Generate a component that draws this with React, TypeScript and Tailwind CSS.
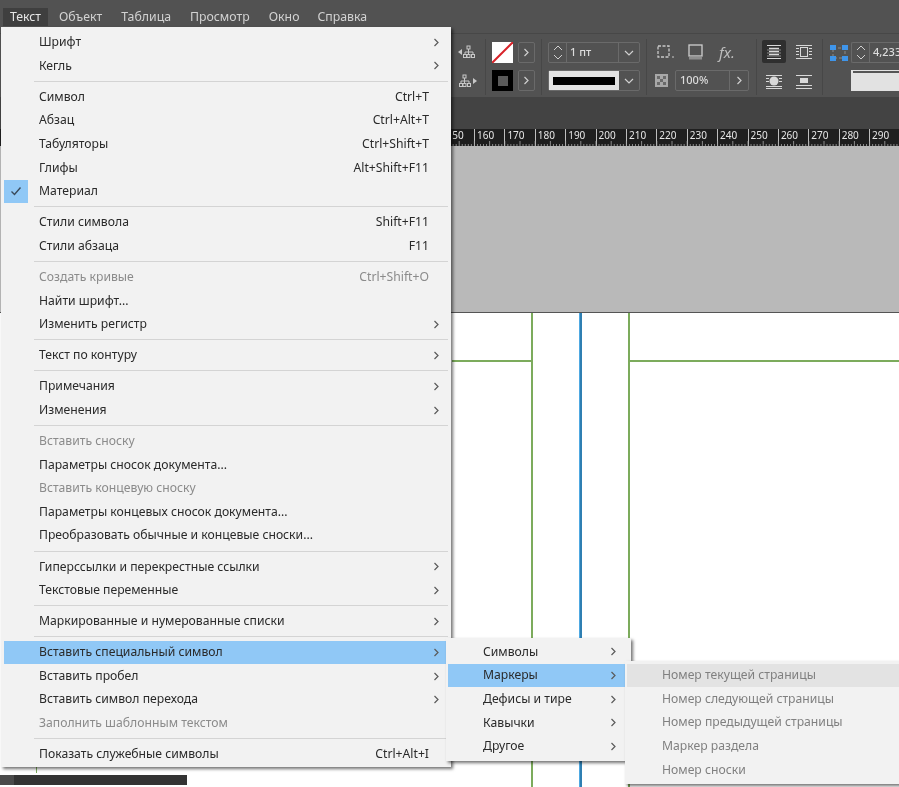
import React from "react";

const FONT = "font-['Noto_Sans','Open_Sans',sans-serif]";

type Row =
  | { sep: true }
  | { label: string; shortcut?: string; arrow?: boolean; disabled?: boolean; hl?: boolean; check?: boolean };

const S: Row = { sep: true };
const rows: Row[] = [
  { label: "Шрифт", arrow: true },
  { label: "Кегль", arrow: true },
  S,
  { label: "Символ", shortcut: "Ctrl+T" },
  { label: "Абзац", shortcut: "Ctrl+Alt+T" },
  { label: "Табуляторы", shortcut: "Ctrl+Shift+T" },
  { label: "Глифы", shortcut: "Alt+Shift+F11" },
  { label: "Материал", check: true },
  S,
  { label: "Стили символа", shortcut: "Shift+F11" },
  { label: "Стили абзаца", shortcut: "F11" },
  S,
  { label: "Создать кривые", shortcut: "Ctrl+Shift+O", disabled: true },
  { label: "Найти шрифт..." },
  { label: "Изменить регистр", arrow: true },
  S,
  { label: "Текст по контуру", arrow: true },
  S,
  { label: "Примечания", arrow: true },
  { label: "Изменения", arrow: true },
  S,
  { label: "Вставить сноску", disabled: true },
  { label: "Параметры сносок документа..." },
  { label: "Вставить концевую сноску", disabled: true },
  { label: "Параметры концевых сносок документа..." },
  { label: "Преобразовать обычные и концевые сноски..." },
  S,
  { label: "Гиперссылки и перекрестные ссылки", arrow: true },
  { label: "Текстовые переменные", arrow: true },
  S,
  { label: "Маркированные и нумерованные списки", arrow: true },
  S,
  { label: "Вставить специальный символ", arrow: true, hl: true },
  { label: "Вставить пробел", arrow: true },
  { label: "Вставить символ перехода", arrow: true },
  { label: "Заполнить шаблонным текстом", disabled: true },
  S,
  { label: "Показать служебные символы", shortcut: "Ctrl+Alt+I" },
];

function Chevron({ color = "#5a5a5a" }: { color?: string }) {
  return (
    <svg width="7" height="9" viewBox="0 0 7 9" fill="none">
      <path d="M1.5 1 L5 4.5 L1.5 8" stroke={color} strokeWidth="1.2" />
    </svg>
  );
}

function MenuRow({ r }: { r: Extract<Row, { label: string }> }) {
  return (
    <div className={`relative flex h-[23.6px] items-center ml-[3px] mr-[5px] pl-[35px] pr-[4px] ${r.hl ? "bg-[#90c8f6]" : ""} ${r.disabled ? "text-[#8b8b8b]" : "text-[#2a2a2a]"}`}>
      {r.check && (
        <div className="absolute left-0 top-0 flex h-[23.6px] w-[24px] items-center justify-center bg-[#90c8f6]">
          <svg width="12" height="10" viewBox="0 0 12 10" fill="none">
            <path d="M1.5 5.5 L4.5 8.5 L10.5 1.5" stroke="#3a4a5a" strokeWidth="1.4" />
          </svg>
        </div>
      )}
      <span className="flex-1 whitespace-nowrap">{r.label}</span>
      {r.shortcut && <span className="whitespace-nowrap">{r.shortcut}</span>}
      <span className="ml-px flex w-[12px] justify-end pr-[2px]">{r.arrow && <Chevron />}</span>
    </div>
  );
}

function Sep() {
  return (
    <div className="flex h-[7.5px] items-center pl-[33px] pr-[3px]">
      <div className="h-px w-full bg-[#d4d4d4]" />
    </div>
  );
}

function SubRow({ label, hl }: { label: string; hl?: boolean }) {
  return (
    <div className={`flex h-[23.7px] items-center ml-[2px] mr-[6px] pl-[35px] pr-[8px] text-[#2a2a2a] ${hl ? "bg-[#90c8f6]" : ""}`}>
      <span className="flex-1 whitespace-nowrap">{label}</span>
      <Chevron />
    </div>
  );
}

function TreeIcon({ flip }: { flip?: boolean }) {
  return (
    <svg width="21" height="14" viewBox="0 0 21 14" fill="none" stroke="#c8c8c8" strokeWidth="1">
      {flip ? <path d="M16 4 L20 7 L16 10 Z" fill="#c8c8c8" stroke="none" /> : <path d="M5 4 L1 7 L5 10 Z" fill="#c8c8c8" stroke="none" />}
      <g transform={flip ? "translate(-4 0)" : ""}>
        <rect x="10" y="1" width="3" height="3" />
        <path d="M11.5 4 V7 M8 9 V7 H16 V9 M11.5 7 V9" />
        <rect x="6.5" y="9.5" width="3" height="3" />
        <rect x="10" y="9.5" width="3" height="3" />
        <rect x="14.5" y="9.5" width="3" height="3" />
      </g>
    </svg>
  );
}

function Stepper() {
  return (
    <div className="flex h-full w-[18px] shrink-0 flex-col items-center justify-center gap-[3px] border-r border-[#6b6b6b]">
      <svg width="10" height="6" viewBox="0 0 10 6" fill="none"><path d="M1 5 L5 1 L9 5" stroke="#d0d0d0" /></svg>
      <svg width="10" height="6" viewBox="0 0 10 6" fill="none"><path d="M1 1 L5 5 L9 1" stroke="#d0d0d0" /></svg>
    </div>
  );
}

function Down() {
  return (
    <div className="flex h-full w-[20px] items-center justify-center">
      <svg width="10" height="6" viewBox="0 0 10 6" fill="none"><path d="M1 1 L5 5 L9 1" stroke="#d0d0d0" strokeWidth="1.2" /></svg>
    </div>
  );
}

function VSep() {
  return <div className="h-[56px] w-px bg-[#474747]" />;
}

function SmallBtn() {
  return (
    <div className="flex h-[21px] w-[17px] items-center justify-center rounded-[2px] border border-[#6a6a6a]">
      <Chevron color="#cfcfcf" />
    </div>
  );
}

function WrapIcon({ kind }: { kind: number }) {
  return (
    <svg width="18" height="16" viewBox="0 0 18 16" fill="none" stroke="#d8d8d8" strokeWidth="1">
      {kind === 0 && (
        <>
          <path d="M2 1.5 H16 M2 14.5 H16" />
          <path d="M4 4.5 H14 M4 7.5 H14 M4 10.5 H14" strokeWidth="1.6" />
          <path d="M2 6 H16 M2 9 H16 M2 12 H16" stroke="#8a8a8a" />
        </>
      )}
      {kind === 1 && (
        <>
          <path d="M1 1.5 H17 M1 14.5 H17" />
          <path d="M1 4.5 H4 M1 7.5 H4 M1 10.5 H4 M14 4.5 H17 M14 7.5 H17 M14 10.5 H17" />
          <rect x="5.5" y="3.5" width="7" height="9" />
        </>
      )}
      {kind === 2 && (
        <>
          <path d="M1 1.5 H17 M1 14.5 H17 M1 12.5 H17" />
          <path d="M1 4.5 H4 M1 7.5 H4 M14 4.5 H17 M14 7.5 H17" />
          <circle cx="9" cy="7" r="4.5" fill="#d8d8d8" stroke="none" />
        </>
      )}
      {kind === 3 && (
        <>
          <path d="M1 1.5 H17 M1 14.5 H17 M1 11.5 H17" />
          <rect x="5" y="4" width="8" height="5" fill="#d8d8d8" stroke="none" />
        </>
      )}
    </svg>
  );
}

function Handles() {
  return (
    <svg className="shrink-0" width="18" height="16" viewBox="0 0 18 16" fill="none">
      <rect x="3" y="3" width="12" height="10" stroke="#8a8a8a" strokeDasharray="3 2" />
      <rect x="0" y="0" width="6" height="5" fill="#3f95ea" />
      <rect x="12" y="0" width="6" height="5" fill="#3f95ea" />
      <rect x="0" y="11" width="6" height="5" fill="#3f95ea" />
      <rect x="12" y="11" width="6" height="5" fill="#3f95ea" />
    </svg>
  );
}

function Toolbar() {
  return (
    <div className="flex h-[64px] items-center border-t border-[#474747] bg-[#525252] pl-[457px] pt-[2px] text-[#dcdcdc]">
      <div className="flex w-[28px] flex-col gap-[15px]">
        <TreeIcon />
        <TreeIcon flip />
      </div>
      <VSep />
      <div className="ml-[6px] flex flex-col gap-[7px]">
        <div className="flex gap-[5px]">
          <svg width="21" height="21" viewBox="0 0 21 21">
            <rect width="21" height="21" fill="#fff" />
            <path d="M0 21 L21 0" stroke="#d8232a" strokeWidth="2" />
          </svg>
          <SmallBtn />
        </div>
        <div className="flex gap-[5px]">
          <div className="flex h-[21px] w-[21px] items-center justify-center bg-black">
            <div className="h-[10px] w-[10px] bg-[#5a5a5a]" />
          </div>
          <SmallBtn />
        </div>
      </div>
      <div className="ml-[6px]"><VSep /></div>
      <div className="ml-[6px] flex w-[92px] flex-col gap-[7px]">
        <div className="flex h-[21px] items-center rounded-[2px] border border-[#6a6a6a]">
          <Stepper />
          <span className="ml-[3px] flex-1 text-[11px] font-medium">1 пт</span>
          <div className="h-full border-l border-[#6a6a6a]"><Down /></div>
        </div>
        <div className="flex h-[21px] items-center rounded-[2px] border border-[#6a6a6a]">
          <div className="flex h-full flex-1 items-center bg-[#e2e2e2] px-[4px]">
            <div className="h-[8px] w-full bg-black" />
          </div>
          <Down />
        </div>
      </div>
      <div className="ml-[6px]"><VSep /></div>
      <div className="ml-[8px] flex w-[94px] flex-col gap-[8px]">
        <div className="flex h-[20px] items-center">
          <svg className="ml-[2px]" width="18" height="14" viewBox="0 0 18 14" fill="none" stroke="#c9c9c9">
            <rect x="1" y="1" width="11" height="11" strokeDasharray="3 1.5" strokeWidth="1.3" />
            <path d="M15 12 H17" />
          </svg>
          <svg className="ml-[13px]" width="15" height="16" viewBox="0 0 15 16" fill="none">
            <rect x="1" y="1" width="13" height="11" stroke="#cfcfcf" strokeWidth="1.3" />
            <rect x="1" y="12.5" width="13" height="3" fill="#8d8d8d" />
          </svg>
          <span className="ml-[16px] text-[15px] italic leading-none text-[#bdbdbd]">fx.</span>
        </div>
        <div className="flex h-[21px] items-center">
          <svg width="13" height="13" viewBox="0 0 13 13">
            <rect width="13" height="13" fill="#a8a8a8" />
            <rect x="2" y="2" width="3" height="3" fill="#6a6a6a" />
            <rect x="8" y="2" width="3" height="3" fill="#6a6a6a" />
            <rect x="5" y="5" width="3" height="3" fill="#6a6a6a" />
            <rect x="2" y="8" width="3" height="3" fill="#6a6a6a" />
            <rect x="8" y="8" width="3" height="3" fill="#6a6a6a" />
          </svg>
          <div className="ml-[7px] flex h-[21px] w-[74px] items-center rounded-[2px] border border-[#6a6a6a] pl-[4px] text-[11px] font-medium">
            <span className="flex-1">100%</span>
            <div className="flex h-full w-[19px] items-center justify-center border-l border-[#6a6a6a]"><Chevron color="#cfcfcf" /></div>
          </div>
        </div>
      </div>
      <div className="ml-[7px]"><VSep /></div>
      <div className="ml-[5px] grid w-[60px] grid-cols-[24px_36px] grid-rows-[23px_23px] gap-y-[7px]">
        <div className="flex items-center justify-center rounded-[2px] bg-[#2f2f2f]"><WrapIcon kind={0} /></div>
        <div className="flex items-center justify-center"><WrapIcon kind={1} /></div>
        <div className="flex items-center justify-center"><WrapIcon kind={2} /></div>
        <div className="flex items-center justify-center"><WrapIcon kind={3} /></div>
      </div>
      <VSep />
      <div className="ml-[7px] flex flex-1 flex-col gap-[7px] overflow-hidden">
        <div className="flex h-[21px] items-center">
          <Handles />
          <div className="ml-[3px] flex h-[21px] flex-1 items-center rounded-l-[2px] border border-r-0 border-[#6a6a6a]">
            <Stepper />
            <span className="ml-[3px] whitespace-nowrap text-[11px] font-medium">4,233</span>
          </div>
        </div>
        <div className="ml-[21px] flex h-[21px] flex-col bg-[#e2e2e2] pl-[2px] pt-[1px]">
          <div className="h-[2px] bg-[#555]" />
        </div>
      </div>
    </div>
  );
}

function Ruler() {
  const labels = ["150", "160", "170", "180", "190", "200", "210", "220", "230", "240", "250", "260", "270", "280", "290"];
  return (
    <div className="relative h-[17px] overflow-hidden bg-[#1f1f1f] pl-[443.6px]">
      <div className="flex h-full">
        {labels.map((l) => (
          <div key={l} className="h-full w-[30.4px] shrink-0 border-l border-[#bdbdbd] pl-[2px] text-[10px] leading-[13px] text-[#e6e6e6]">
            {l}
          </div>
        ))}
      </div>
      <svg className="absolute bottom-0 left-[443.6px]" width="480" height="5" viewBox="0 0 480 5">
        {Array.from({ length: 160 }).map((_, i) => (
          <line key={i} x1={i * 3.04} x2={i * 3.04} y1={i % 5 === 0 ? 0 : 3} y2={5} stroke="#a8a8a8" strokeWidth="0.8" />
        ))}
      </svg>
    </div>
  );
}

export default function App() {
  return (
    <div className={`relative flex h-[787px] w-[899px] flex-col overflow-hidden bg-white text-[12.2px] blur-[0.5px] ${FONT}`}>
      {/* menu bar */}
      <div className="flex h-[33px] items-start bg-[#525252] pl-[3px] pt-[8px] text-[12.3px] text-[#d2d2d2]">
        <div className="flex h-[18px] w-[45px] items-center justify-center bg-[#3f3f3f] text-[#e6e6e6]">Текст</div>
        <span className="ml-[11px] leading-[18px]">Объект</span>
        <span className="ml-[19px] leading-[18px]">Таблица</span>
        <span className="ml-[19px] leading-[18px]">Просмотр</span>
        <span className="ml-[19px] leading-[18px]">Окно</span>
        <span className="ml-[18px] leading-[18px]">Справка</span>
      </div>
      <Toolbar />
      <div className="h-[32px] bg-[#434343]" />
      <Ruler />
      <div className="h-[166px] bg-[#b9b9b9]" />
      {/* page */}
      <div className="relative flex-1 border-t border-[#555] bg-white">
        <div className="absolute left-[531px] top-0 h-full w-[2px] bg-[#7cab5c]" />
        <div className="absolute left-[628px] top-0 h-full w-[2px] bg-[#7cab5c]" />
        <div className="absolute left-[579px] top-0 h-full w-[3px] border-l border-[#4fa9e2] bg-[#2f7fb2]" />
        <div className="absolute left-[452px] top-[47px] h-[2px] w-[80px] bg-[#7cab5c]" />
        <div className="absolute left-[629px] top-[47px] h-[2px] w-[270px] bg-[#7cab5c]" />
        <div className="absolute left-[36px] top-[440px] h-[20px] w-[1px] bg-[#7cab5c]" />
        <div className="absolute bottom-[2px] left-0 h-[10px] w-[187px] bg-[#333]">
          <div className="h-full w-[14px] bg-[#4a4a4a]" />
        </div>
      </div>

      {/* main dropdown */}
      <div className="absolute left-[1px] top-[27px] h-[740px] w-[450px] bg-[#f2f2f2] pt-[3.5px] shadow-[2px_2px_3px_rgba(0,0,0,0.55)]">
        {rows.map((r, i) => ("sep" in r ? <Sep key={i} /> : <MenuRow key={i} r={r} />))}
      </div>

      {/* submenu 1 */}
      <div className="absolute left-[446px] top-[638px] h-[123px] w-[185px] bg-[#f2f2f2] pt-[2px] shadow-[2px_2px_3px_rgba(0,0,0,0.55)]">
        <SubRow label="Символы" />
        <SubRow label="Маркеры" hl />
        <SubRow label="Дефисы и тире" />
        <SubRow label="Кавычки" />
        <SubRow label="Другое" />
      </div>

      {/* submenu 2 */}
      <div className="absolute left-[625px] top-[661px] h-[123px] w-[280px] bg-[#f2f2f2] pt-[2.5px] text-[#808080] shadow-[2px_2px_3px_rgba(0,0,0,0.55)]">
        {["Номер текущей страницы", "Номер следующей страницы", "Номер предыдущей страницы", "Маркер раздела", "Номер сноски"].map((t, i) => (
          <div key={t} className={`ml-[2px] flex h-[23.6px] items-center pl-[35px] ${i === 0 ? "bg-[#e3e3e3]" : ""}`}>
            {t}
          </div>
        ))}
      </div>
    </div>
  );
}
